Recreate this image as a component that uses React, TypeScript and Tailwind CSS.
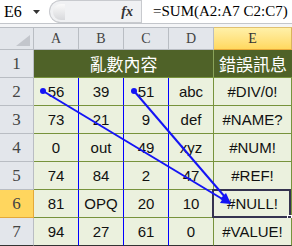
const COLS = ['A', 'B', 'C', 'D', 'E'];

const ROWS = [
  ['56', '39', '51', 'abc', '#DIV/0!'],
  ['73', '21', '9', 'def', '#NAME?'],
  ['0', 'out', '49', 'xyz', '#NUM!'],
  ['74', '84', '2', '47', '#REF!'],
  ['81', 'OPQ', '20', '10', '#NULL!'],
  ['94', '27', '61', '0', '#VALUE!'],
];

// right border colour per column (A..E)
const RIGHT = [
  'border-r-[#0000ff]',
  'border-r-[#0000ff]',
  'border-r-[#0000ff]',
  'border-r-[#77933c]',
  'border-r-[#77933c]',
];

function FormulaBar() {
  return (
    <div className="flex h-[24px] border-b border-[#c3c6cb] bg-white">
      <div className="flex w-[49px] items-center justify-between pl-[4px] pr-[9px]">
        <span className="font-['Liberation_Serif',serif] text-[16px] leading-none text-black">E6</span>
        <svg width="7" height="4" viewBox="0 0 7 4">
          <path d="M0 0h7L3.5 4z" fill="#333" />
        </svg>
      </div>
      <div className="flex w-[92px] items-center justify-end rounded-l-full border border-r-0 border-[#c8cace] bg-[#f0f1f3] pr-[8px]">
        <div className="mr-auto ml-[3px] h-[16px] w-[12px] rounded-l-full bg-gradient-to-b from-[#fafafa] to-[#d8d9dc]" />
        <span className="font-['Liberation_Serif',serif] text-[14px] font-bold italic leading-none text-[#333]">fx</span>
      </div>
      <div className="flex flex-1 items-center border-l border-[#c8cace] pl-[11px]">
        <span className="font-['Liberation_Serif',serif] text-[15px] leading-none text-black">=SUM(A2:A7 C2:C7)</span>
      </div>
    </div>
  );
}

export default function App() {
  return (
    <div className="relative h-[246px] w-[292px] overflow-hidden bg-white font-['Liberation_Sans',sans-serif]">
      <FormulaBar />
      <div className="h-[3px] bg-[#f4f5f7]" />
      <div className="grid grid-cols-[34px_45px_45px_45px_45px_78px] grid-rows-[23px_28px_repeat(6,28px)]">
        {/* corner */}
        <div className="relative border-r border-b border-t border-[#b9bdc3] bg-[#e3e6eb]">
          <svg className="absolute right-[3px] bottom-[3px]" width="14" height="11" viewBox="0 0 14 11">
            <path d="M14 0V11H0z" fill="#c3c6cc" />
          </svg>
        </div>
        {COLS.map((c) =>
          c === 'E' ? (
            <div
              key={c}
              className="flex items-center justify-center border-t border-r border-b border-t-[#e0c070] border-r-[#d9b45a] border-b-[#e8a93a] bg-gradient-to-b from-[#fff0a8] to-[#ffd85e] font-['Liberation_Serif',serif] text-[14px] text-[#333]"
            >
              {c}
            </div>
          ) : (
            <div
              key={c}
              className="flex items-center justify-center border-t border-r border-b border-[#b9bdc3] bg-[#e3e6eb] font-['Liberation_Serif',serif] text-[14px] text-[#444]"
            >
              {c}
            </div>
          )
        )}

        {/* row 1 */}
        <div className="flex items-end justify-center border-r border-b border-[#b9bdc3] bg-[#e3e6eb] pb-[1px] font-['Liberation_Serif',serif] text-[17px] text-[#444]">
          1
        </div>
        <div className="col-span-4 flex items-center justify-center border-r border-b border-r-[#8aa35a] border-b-[#77933c] bg-[#4f6228] font-['Noto_Sans_CJK_TC',sans-serif] text-[17px] text-white">
          亂數內容
        </div>
        <div className="flex items-center justify-center border-b border-[#77933c] bg-[#4f6228] font-['Noto_Sans_CJK_TC',sans-serif] text-[17px] text-white">
          錯誤訊息
        </div>

        {ROWS.map((row, i) => {
          const n = i + 2;
          const last = n === 7;
          return [
            n === 6 ? (
              <div
                key={`h${n}`}
                className="flex items-end justify-center border-r border-b border-r-[#e3a93a] border-b-[#e3a93a] bg-[#ffd65e] pb-[1px] font-['Liberation_Serif',serif] text-[17px] text-[#444]"
              >
                {n}
              </div>
            ) : (
              <div
                key={`h${n}`}
                className={`flex items-end justify-center border-r border-b border-r-[#b9bdc3] bg-[#e3e6eb] pb-[1px] font-['Liberation_Serif',serif] text-[17px] text-[#444] ${last ? 'border-b-[#333]' : 'border-b-[#b9bdc3]'}`}
              >
                {n}
              </div>
            ),
            ...row.map((v, j) => (
              <div
                key={`${n}-${j}`}
                className={`relative flex items-center justify-center border-r border-b bg-[#ebf1de] pt-[2px] text-[15px] text-[#111] ${RIGHT[j]} ${last ? 'border-b-[#333]' : 'border-b-[#77933c]'}`}
              >
                {v}
                {n === 6 && j === 4 && (
                  <>
                    <div className="absolute top-[-1px] right-0 bottom-[-1px] left-[-2px] border-2 border-[#35334f]" />
                    <div className="absolute right-[-1px] bottom-[-3px] h-[5px] w-[5px] border border-white bg-[#35334f]" />
                  </>
                )}
              </div>
            )),
          ];
        })}
      </div>

      {/* trace precedents arrows */}
      <svg className="pointer-events-none absolute top-0 left-0" width="292" height="246" viewBox="0 0 292 246">
        <line x1="43" y1="91" x2="224" y2="200" stroke="#1414f5" strokeWidth="2" />
        <line x1="134" y1="91" x2="225" y2="197" stroke="#1414f5" strokeWidth="2" />
        <circle cx="43" cy="91" r="3" fill="#1414f5" />
        <circle cx="134" cy="91" r="3" fill="#1414f5" />
        <path d="M231 204L220 203L225 195z" fill="#1414f5" />
        <path d="M231 204L226 193L220 199z" fill="#1414f5" />
      </svg>
    </div>
  );
}
